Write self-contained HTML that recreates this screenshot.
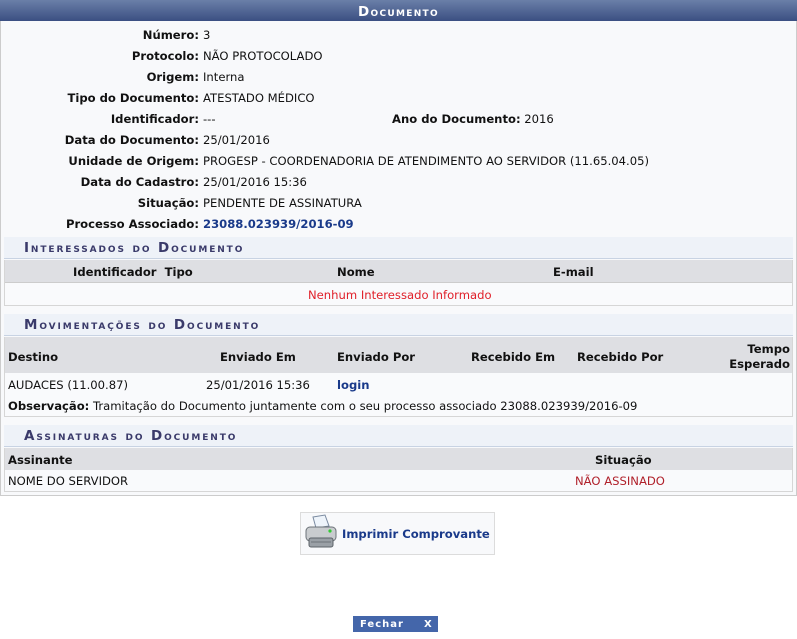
<!DOCTYPE html>
<html><head><meta charset="utf-8"><style>
*{margin:0;padding:0;box-sizing:border-box}
body{width:797px;height:639px;background:#fff;font-family:"DejaVu Sans",Verdana,sans-serif;font-size:11.6px;color:#111;position:relative;overflow:hidden}
.a{position:absolute;white-space:nowrap}
.outer{position:absolute;left:0;top:0;width:797px;height:496px;border:1px solid #ccc;background:#f8f9fb}
.hdr{position:absolute;left:0;top:0;width:797px;height:21px;background:linear-gradient(#6a7fa8,#3b4f82);color:#fff;font-weight:bold;text-align:center;line-height:24px;font-size:13.5px;font-variant:small-caps;letter-spacing:1.3px}
.l{position:absolute;right:598px;font-weight:bold;white-space:nowrap}
.v{position:absolute;left:203px;white-space:nowrap}
.sub{position:absolute;left:4px;width:789px;height:22px;background:#eef2f8;border-bottom:1px solid #c8d3e3;color:#3a3a6a;font-weight:bold;font-variant:small-caps;letter-spacing:1.9px;font-size:13.5px;line-height:23px;padding-left:20px}
.box{position:absolute;left:4px;width:789px;border:1px solid #d6d6d6;border-top:none;background:#f9fafc}
.th{position:absolute;left:0;width:787px;background:#dedfe3}
b{font-weight:bold}
.red{color:#e0202a}
.blue{color:#1a3a8a;font-weight:bold}
</style></head><body>
<div class="outer"></div>
<div class="hdr">Documento</div>
<div class="l" style="top:28px">Número:</div><div class="v" style="top:28px">3</div>
<div class="l" style="top:49px">Protocolo:</div><div class="v" style="top:49px">NÃO PROTOCOLADO</div>
<div class="l" style="top:70px">Origem:</div><div class="v" style="top:70px">Interna</div>
<div class="l" style="top:91px">Tipo do Documento:</div><div class="v" style="top:91px">ATESTADO MÉDICO</div>
<div class="l" style="top:112px">Identificador:</div><div class="v" style="top:112px">---</div>
<div class="a" style="left:392px;top:112px"><b>Ano do Documento:</b> 2016</div>
<div class="l" style="top:133px">Data do Documento:</div><div class="v" style="top:133px">25/01/2016</div>
<div class="l" style="top:154px">Unidade de Origem:</div><div class="v" style="top:154px">PROGESP - COORDENADORIA DE ATENDIMENTO AO SERVIDOR (11.65.04.05)</div>
<div class="l" style="top:175px">Data do Cadastro:</div><div class="v" style="top:175px">25/01/2016 15:36</div>
<div class="l" style="top:196px">Situação:</div><div class="v" style="top:196px">PENDENTE DE ASSINATURA</div>
<div class="l" style="top:217px">Processo Associado:</div><div class="v blue" style="top:217px">23088.023939/2016-09</div>

<div class="sub" style="top:237px">Interessados do Documento</div>
<div class="box" style="top:260px;height:46px">
 <div class="th" style="top:0;height:23px;border-bottom:1px solid #ccc"></div>
 <div class="a" style="left:68px;top:5px;font-weight:bold">Identificador&nbsp; Tipo</div>
 <div class="a" style="left:332px;top:5px;font-weight:bold">Nome</div>
 <div class="a" style="left:548px;top:5px;font-weight:bold">E-mail</div>
 <div class="a red" style="left:303px;top:28px">Nenhum Interessado Informado</div>
</div>

<div class="sub" style="top:314px">Movimentações do Documento</div>
<div class="box" style="top:337px;height:80px">
 <div class="th" style="top:0;height:36px"></div>
 <div class="a" style="left:3px;top:13px;font-weight:bold">Destino</div>
 <div class="a" style="left:215px;top:13px;font-weight:bold">Enviado Em</div>
 <div class="a" style="left:332px;top:13px;font-weight:bold">Enviado Por</div>
 <div class="a" style="left:466px;top:13px;font-weight:bold">Recebido Em</div>
 <div class="a" style="left:572px;top:13px;font-weight:bold">Recebido Por</div>
 <div class="a" style="right:2px;top:5px;font-weight:bold;text-align:right;line-height:15px">Tempo<br>Esperado</div>
 <div class="a" style="left:3px;top:41px">AUDACES (11.00.87)</div>
 <div class="a" style="left:201px;top:41px">25/01/2016 15:36</div>
 <div class="a blue" style="left:332px;top:41px">login</div>
 <div class="a" style="left:3px;top:62px"><b>Observação:</b> Tramitação do Documento juntamente com o seu processo associado 23088.023939/2016-09</div>
</div>

<div class="sub" style="top:425px">Assinaturas do Documento</div>
<div class="box" style="top:448px;height:44px">
 <div class="th" style="top:0;height:22px"></div>
 <div class="a" style="left:3px;top:5px;font-weight:bold">Assinante</div>
 <div class="a" style="left:590px;top:5px;font-weight:bold">Situação</div>
 <div class="a" style="left:3px;top:26px">NOME DO SERVIDOR</div>
 <div class="a" style="left:570px;top:26px;color:#b0202a">NÃO ASSINADO</div>
</div>

<div class="a" style="left:300px;top:512px;width:195px;height:43px;border:1px solid #dcdcdc;background:#f8f9fb"></div>
<svg class="a" style="left:303px;top:514px" width="36" height="36" viewBox="0 0 36 36">
 <path d="M10 3 L22 1 L26 12 L13 14 Z" fill="#eef4fb" stroke="#7a8aa0"/>
 <rect x="3" y="13" width="30" height="14" rx="4" fill="#c9cccf" stroke="#6c7278"/>
 <rect x="6" y="24" width="24" height="9" rx="2" fill="#9aa0a6" stroke="#5c6268"/>
 <line x1="8" y1="28" x2="28" y2="28" stroke="#6c7278"/>
 <circle cx="27" cy="17" r="1.6" fill="#3c3"/>
</svg>
<div class="a blue" style="left:342px;top:527px">Imprimir Comprovante</div>

<div class="a" style="left:353px;top:616px;width:85px;height:16px;background:#4466aa;color:#fff;font-weight:bold;font-size:10px;line-height:17px;letter-spacing:1px"><span style="position:absolute;left:7px">Fechar</span><span style="position:absolute;left:71px">X</span></div>
</body></html>
